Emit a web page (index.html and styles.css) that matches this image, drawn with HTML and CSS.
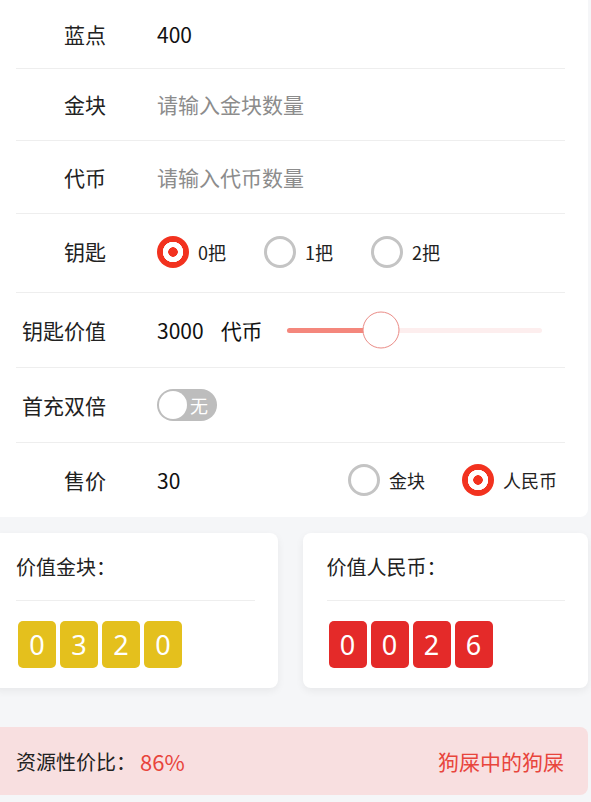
FILE: index.html
```html
<!DOCTYPE html>
<html lang="zh-CN">
<head>
<meta charset="utf-8">
<title>钥匙价值</title>
<link rel="stylesheet" href="styles.css">
</head>
<body>
<div class="page">
  <div class="form-card">
    <div class="row row-1">
      <div class="label">蓝点</div>
      <div class="value">400</div>
    </div>
    <div class="row row-2">
      <div class="label">金块</div>
      <div class="value placeholder">请输入金块数量</div>
    </div>
    <div class="row row-3">
      <div class="label">代币</div>
      <div class="value placeholder">请输入代币数量</div>
    </div>
    <div class="row row-4">
      <div class="label">钥匙</div>
      <div class="value radios">
        <div class="radio-item"><span class="radio radio-on"></span><span class="radio-text">0把</span></div>
        <div class="radio-item"><span class="radio"></span><span class="radio-text">1把</span></div>
        <div class="radio-item"><span class="radio"></span><span class="radio-text">2把</span></div>
      </div>
    </div>
    <div class="row row-5">
      <div class="label">钥匙价值</div>
      <div class="value key-value">
        <span class="num">3000</span>
        <span class="unit">代币</span>
        <div class="slider">
          <div class="slider-fill" style="width:94px"></div>
          <div class="slider-thumb" style="left:94px"></div>
        </div>
      </div>
    </div>
    <div class="row row-6">
      <div class="label">首充双倍</div>
      <div class="value">
        <div class="switch"><span class="switch-knob"></span><span class="switch-text">无</span></div>
      </div>
    </div>
    <div class="row row-7">
      <div class="label">售价</div>
      <div class="value sale">
        <span class="num">30</span>
        <div class="radios sale-radios">
          <div class="radio-item"><span class="radio"></span><span class="radio-text">金块</span></div>
          <div class="radio-item"><span class="radio radio-on"></span><span class="radio-text">人民币</span></div>
        </div>
      </div>
    </div>
  </div>

  <div class="stats">
    <div class="stat-card stat-left">
      <div class="stat-title">价值金块：</div>
      <div class="digits">
        <span class="digit gold">0</span><span class="digit gold">3</span><span class="digit gold">2</span><span class="digit gold">0</span>
      </div>
    </div>
    <div class="stat-card stat-right">
      <div class="stat-title">价值人民币：</div>
      <div class="digits">
        <span class="digit red">0</span><span class="digit red">0</span><span class="digit red">2</span><span class="digit red">6</span>
      </div>
    </div>
  </div>

  <div class="ratio-bar">
    <div class="ratio-left">资源性价比：<span class="ratio-num">86%</span></div>
    <div class="ratio-right">狗屎中的狗屎</div>
  </div>
</div>
</body>
</html>
```

FILE: styles.css
```css
html, body {
  margin: 0;
  padding: 0;
}
body {
  background: #f5f6f8;
  font-family: "Noto Sans CJK SC", "Noto Sans", sans-serif;
  color: #222;
  overflow: hidden;
}
.page {
  margin-left: -8px;
  width: 596px;
}
.form-card {
  background: #fff;
  border-radius: 0 0 8px 8px;
  padding: 0 23px 0 24px;
}
.row {
  display: flex;
  align-items: center;
  box-sizing: border-box;
  border-bottom: 1px solid #eeeeee;
}
.row-1 { height: 69px; }
.row-2 { height: 72px; }
.row-3 { height: 73px; }
.row-4 { height: 79px; padding-bottom: 3px; }
.row-5 { height: 75px; }
.row-6 { height: 75px; }
.row-7 { height: 74px; border-bottom: none; }
.label {
  width: 90px;
  text-align: right;
  font-size: 21px;
  line-height: 1;
  color: #222;
  flex: none;
}
.value {
  margin-left: 51px;
  font-size: 21px;
  line-height: 1;
  color: #111;
  display: flex;
  align-items: center;
}
.placeholder {
  color: #8c8c8c;
}
.radios {
  display: flex;
  align-items: center;
}
.radio-item {
  display: flex;
  align-items: center;
  gap: 9px;
  margin-right: 38px;
}
.radio {
  width: 32px;
  height: 32px;
  box-sizing: border-box;
  border-radius: 50%;
  border: 3px solid #c4c4c4;
  background: #fff;
  flex: none;
}
.radio-on {
  border: none;
  background: radial-gradient(circle, #f2321f 0 4.5px, #fff 5px 10px, #f2321f 10.5px);
}
.radio-text {
  font-size: 18px;
  color: #222;
}
.key-value .unit {
  margin-left: 17px;
}
.slider {
  position: relative;
  width: 255px;
  height: 5px;
  margin-left: 24px;
  background: #fdeeee;
  border-radius: 3px;
}
.slider-fill {
  height: 100%;
  background: #f4877c;
  border-radius: 3px;
}
.slider-thumb {
  position: absolute;
  top: 50%;
  width: 37px;
  height: 37px;
  box-sizing: border-box;
  border-radius: 50%;
  border: 1px solid #ea8c87;
  background: #fff;
  transform: translate(-50%, -50%);
}
.switch {
  width: 60px;
  height: 32px;
  box-sizing: border-box;
  border-radius: 16px;
  background: #bdbdbd;
  display: flex;
  align-items: center;
  padding: 0 2px;
}
.switch-knob {
  width: 28px;
  height: 28px;
  border-radius: 50%;
  background: #fff;
  flex: none;
}
.switch-text {
  color: #fff;
  font-size: 18px;
  margin-left: 3px;
}
.sale {
  flex: 1;
}
.sale-radios {
  margin-left: auto;
}
.sale-radios .radio-item {
  margin-right: 37px;
}
.sale-radios .radio-item:last-child {
  margin-right: 8px;
}
.stats {
  display: flex;
  gap: 25px;
  margin-top: 16px;
}
.stat-card {
  flex: 1;
  background: #fff;
  border-radius: 8px;
  box-shadow: 0 3px 8px rgba(0, 0, 0, 0.06);
  padding: 24px 23px 20px 24px;
}
.stat-title {
  font-size: 20px;
  line-height: 20px;
  color: #222;
  padding-bottom: 23px;
  border-bottom: 1px solid #eeeeee;
}
.digits {
  display: flex;
  gap: 4px;
  margin-top: 20px;
  padding-left: 2px;
}
.digit {
  width: 38px;
  height: 47px;
  border-radius: 5px;
  color: #fff;
  font-family: "Noto Sans", "Open Sans", sans-serif;
  font-size: 27px;
  display: flex;
  align-items: center;
  justify-content: center;
}
.gold { background: #e4c01d; }
.red { background: #e42a29; }
.ratio-bar {
  margin-top: 39px;
  height: 68px;
  box-sizing: border-box;
  background: #f8dfe0;
  border-radius: 8px;
  padding: 0 24px;
  display: flex;
  align-items: center;
  justify-content: space-between;
}
.ratio-left {
  font-size: 20px;
  color: #222;
  display: flex;
  align-items: center;
}
.ratio-num {
  color: #e8453c;
  font-size: 22px;
  margin-left: 4px;
}
.ratio-right {
  font-size: 21px;
  color: #e8453c;
}
```
